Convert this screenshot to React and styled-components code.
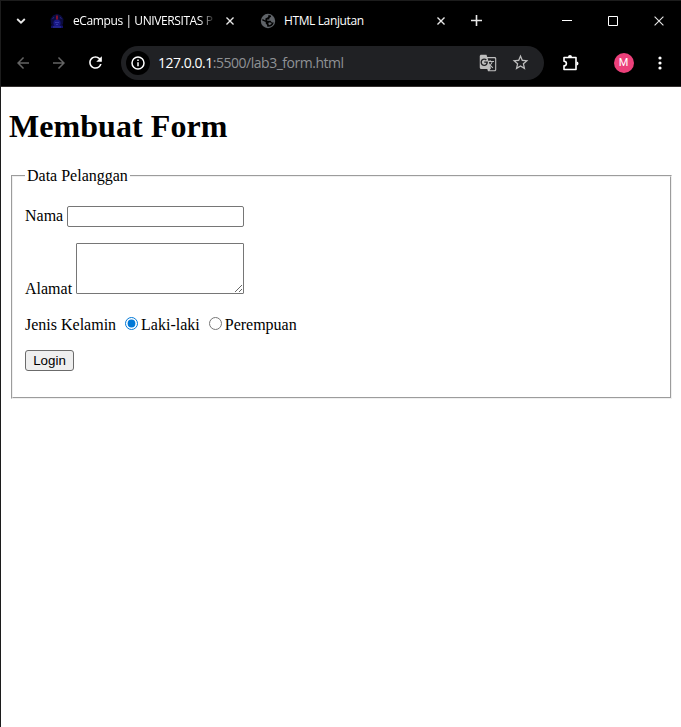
import React from "react";
import styled, { createGlobalStyle } from "styled-components";
import {
  MdArrowBack,
  MdArrowForward,
  MdRefresh,
  MdStarBorder,
  MdGTranslate,
} from "react-icons/md";

const GlobalStyle = createGlobalStyle`
  * { box-sizing: border-box; }
  body { margin: 0; background: #fff; overflow: hidden; }
  svg { display: block; flex: none; }
`;

const Window = styled.div`
  display: flex;
  flex-direction: column;
  width: 681px;
  height: 727px;
  border: solid #1c1c1c;
  border-width: 1px 0 0 1px;
  background: #fff;
`;

const TabStrip = styled.header`
  display: grid;
  grid-template-columns: 40px 211px 211px 27px 1fr 137px;
  align-items: center;
  height: 39px;
  background: #000;
  color: #fff;
`;

const StripButton = styled.span`
  display: flex;
  align-items: center;
  justify-content: center;
  height: 38px;
  color: #e8e8e8;
`;

const Tab = styled.div`
  display: flex;
  align-items: center;
  height: 38px;
  padding: 0 18px 0 8px;
  color: #5f6368;
`;

const TabTitle = styled.span`
  flex: 0 0 141px;
  width: 141px;
  margin-left: 8px;
  white-space: nowrap;
  font: 12px/18px "Open Sans", sans-serif;
  letter-spacing: ${(p) => p.$spacing};
  color: #fff;
  ${(p) => p.$fade && "mask-image: linear-gradient(90deg, #000 126px, transparent 143px);"}
`;

const TabClose = styled.span`
  display: flex;
  margin-left: auto;
  color: #e8e8e8;
`;

const WindowControls = styled.div`
  display: grid;
  grid-template-columns: repeat(3, 46px);
`;

const Toolbar = styled.div`
  display: flex;
  align-items: center;
  height: 46px;
  padding: 0 0 1px;
  background: #000;
`;

const ToolButton = styled.span`
  display: flex;
  align-items: center;
  justify-content: center;
  width: ${(p) => p.$width || 36}px;
  height: 34px;
  color: ${(p) => (p.$muted ? "#646464" : "#fff")};
`;

const NavGroup = styled.nav`
  display: flex;
  width: 120px;
  padding-left: 4px;
`;

const AddressBar = styled.div`
  display: flex;
  align-items: center;
  width: 423px;
  height: 34px;
  padding: 0 8px 0 5px;
  border-radius: 17px;
  background: #202124;
`;

const SiteInfo = styled.span`
  display: flex;
  align-items: center;
  justify-content: center;
  width: 24px;
  height: 24px;
  border-radius: 50%;
  background: #000;
`;

const Url = styled.span`
  flex: 1;
  margin-left: 8px;
  color: #8f9195;
  font: 14px/20px "Open Sans", sans-serif;
  letter-spacing: -0.48px;
  white-space: nowrap;
`;

const Host = styled.span`
  color: #fff;
`;

const BarAction = styled.span`
  display: flex;
  justify-content: center;
  width: 32px;
  color: #bdbdbd;
`;

const Avatar = styled.span`
  display: flex;
  align-items: center;
  justify-content: center;
  width: 20px;
  height: 20px;
  border-radius: 50%;
  background: #ec407a;
  color: #fff;
  font: 11px/20px Roboto, sans-serif;
`;

const Page = styled.main`
  flex: 1;
  padding: 0 7px 0 8px;
  border-top: 1px solid #34302f;
  background: #fff;
  color: #000;
  font: 16px "Liberation Serif", serif;
`;

const Heading = styled.h1`
  margin: 21px 0 22px;
  font-size: 32px;
  line-height: 37px;
  font-weight: 700;
  letter-spacing: 0.06px;
`;

const FormGroup = styled.fieldset`
  min-width: 0;
  height: 232px;
  margin: 0 2px;
  padding: 4.6px 12px 10px;
  border: 2px groove #f0f0f0;
`;

const Legend = styled.legend`
  padding: 0 2px;
  line-height: 18px;
`;

const Field = styled.p`
  margin: 16px 0;
`;

const TextInput = styled.input`
  width: 177px;
  height: 21px;
  padding: 1px 2px;
  border: 1px solid #767676;
  border-radius: 2px;
  font: 13.333px "Liberation Sans", sans-serif;
`;

const TextArea = styled.textarea`
  width: 168px;
  height: 51px;
  padding: 2px;
  border: 1px solid #767676;
  border-radius: 1px;
  font: 13.333px "Liberation Mono", monospace;
`;

const Radio = styled.input`
  width: 13px;
  height: 13px;
  margin: 3px 3px 0 5px;
  accent-color: #0078d7;
`;

const SubmitButton = styled.button`
  width: 49px;
  height: 21px;
  padding: 0;
  border: 1px solid #6b6b6b;
  border-radius: 3px;
  background: #efefef;
  color: #000;
  font: 13.333px "Liberation Sans", sans-serif;
`;

const Cross = ({ size = 8, width = 1.7 }) => (
  <svg width={size} height={size} viewBox="0 0 10 10" fill="none" stroke="currentColor" strokeWidth={width}>
    <path d="M.6.6 9.4 9.4M9.4.6.6 9.4" />
  </svg>
);

const CampusCrest = () => (
  <svg width="16" height="16" viewBox="0 0 16 16">
    <path d="M8 .8 12 2.5 14.5 6 14 11l-1.500 2H3.500L2 11 1.500 6 4 2.500Z" fill="#0b0b3e" />
    <path d="M2 12.500h12V15H2Z" fill="#111169" />
    <circle cx="8" cy="10" r="3.600" fill="#191987" />
    <path d="M6 9.500h4M7 11.500h2M4 14h8" stroke="#3538a8" fill="none" />
    <path d="M8 2.500v4" stroke="#b51624" strokeWidth="1.400" />
    <path d="M3.500 6 5 4M12.500 6 11 4" stroke="#24247b" />
  </svg>
);

const Globe = () => (
  <svg width="16" height="16" viewBox="0 0 16 16">
    <circle cx="8" cy="8" r="7.200" fill="#5f6368" />
    <path
      d="M8.200 2.300h2.300l.6 1.500-1.700 1.200v1.500H7.200v1.300h3.400l1.200 1.700h2A6 6 0 0 1 8 13.800l-.9-.2V12L5.700 10.600V9.100L2.200 7.400A6 6 0 0 1 2.600 5.900l2.800 1.500V5.600l2.800-1.500Z"
      fill="#000"
    />
    <path d="M8.800 9.500h1.700l1.300 1.200-2.300 1.600-1.300-1.200Z" fill="#5f6368" />
  </svg>
);

const Extension = () => (
  <svg width="20" height="20" viewBox="0 1 20 20">
    <path
      d="M3 5.500h12v12H3V13.800c1.400 0 2.400-1 2.400-2.300S4.400 9.200 3 9.200Z"
      fill="none" stroke="currentColor" strokeWidth="1.600" strokeLinejoin="round"
    />
    <path d="M7 5a2 2 0 0 1 4 0ZM15.500 9.500a2 2 0 0 1 0 4Z" fill="currentColor" />
  </svg>
);

export default function App() {
  return (
    <>
      <GlobalStyle />
      <Window>
        <TabStrip>
          <StripButton>
            <svg width="10" height="6" viewBox="0 0 10 6" fill="none" stroke="currentColor" strokeWidth="1.800">
              <path d="m1.200 1 3.800 3.700L8.800 1" />
            </svg>
          </StripButton>
          <Tab>
            <CampusCrest />
            <TabTitle $fade $spacing="-0.4px">eCampus | UNIVERSITAS P</TabTitle>
            <TabClose><Cross /></TabClose>
          </Tab>
          <Tab>
            <Globe />
            <TabTitle $spacing="-0.38px">HTML Lanjutan</TabTitle>
            <TabClose><Cross /></TabClose>
          </Tab>
          <StripButton>
            <svg width="11" height="11" viewBox="0 0 11 11" stroke="currentColor" strokeWidth="1.600">
              <path d="M5.500 0v11M0 5.500h11" />
            </svg>
          </StripButton>
          <span />
          <WindowControls>
            <StripButton>
              <svg width="10" height="10" viewBox="0 0 10 10" stroke="#fff"><path d="M0 4.500h10" /></svg>
            </StripButton>
            <StripButton>
              <svg width="10" height="10" viewBox="0 0 10 10" fill="none" stroke="#fff"><path d="M.5.5h9v9h-9Z" /></svg>
            </StripButton>
            <StripButton><Cross size={10} width={1.1} /></StripButton>
          </WindowControls>
        </TabStrip>
        <Toolbar>
          <NavGroup>
            <ToolButton $muted><MdArrowBack size={18} /></ToolButton>
            <ToolButton $muted><MdArrowForward size={18} /></ToolButton>
            <ToolButton><MdRefresh size={19} /></ToolButton>
          </NavGroup>
          <AddressBar>
            <SiteInfo>
              <svg width="14" height="14" viewBox="0 0 14 14" fill="none" stroke="#fff" strokeWidth="1.500">
                <circle cx="7" cy="7" r="6" />
                <path d="M7 6.200v4M7 3.500v1.500" />
              </svg>
            </SiteInfo>
            <Url><Host>127.0.0.1</Host>:5500/lab3_form.html</Url>
            <BarAction><MdGTranslate size={18} /></BarAction>
            <BarAction><MdStarBorder size={19} /></BarAction>
          </AddressBar>
          <ToolButton $width={53}><Extension /></ToolButton>
          <ToolButton $width={53}><Avatar>M</Avatar></ToolButton>
          <ToolButton $width={20}>
            <svg width="4" height="14" viewBox="0 0 4 14" fill="currentColor">
              <circle cx="2" cy="2" r="1.600" /><circle cx="2" cy="7" r="1.600" /><circle cx="2" cy="12" r="1.600" />
            </svg>
          </ToolButton>
        </Toolbar>
        <Page>
          <Heading>Membuat Form</Heading>
          <FormGroup>
            <Legend>Data Pelanggan</Legend>
            <Field>Nama <TextInput aria-label="Nama" /></Field>
            <Field>Alamat <TextArea aria-label="Alamat" /></Field>
            <Field>
              Jenis Kelamin <Radio type="radio" name="gender" defaultChecked />Laki-laki{" "}
              <Radio type="radio" name="gender" />Perempuan
            </Field>
            <Field><SubmitButton type="button">Login</SubmitButton></Field>
          </FormGroup>
        </Page>
      </Window>
    </>
  );
}
